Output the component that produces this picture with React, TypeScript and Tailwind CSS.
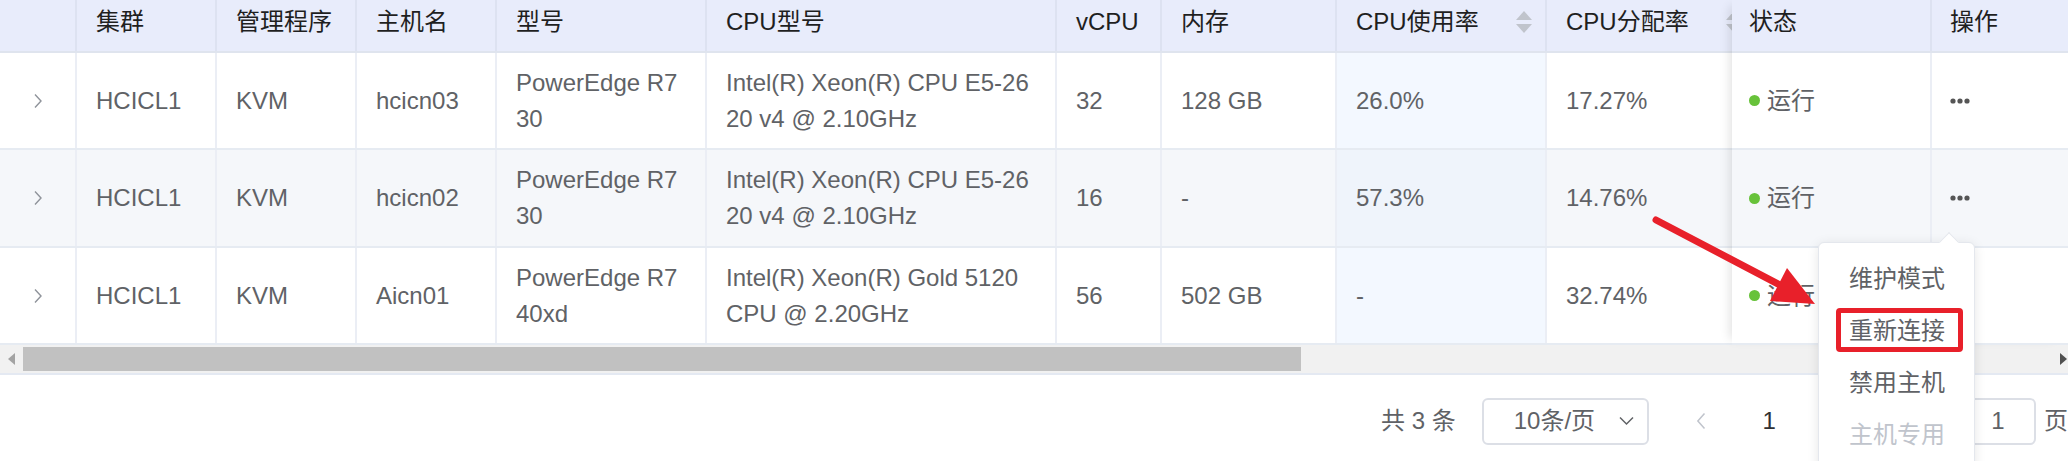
import React from 'react';

interface HostRow {
    cluster: string;
    hypervisor: string;
    host: string;
    model: string[];
    cpuModel: string[];
    vcpu: string;
    memory: string;
    cpuUsage: string;
    cpuAlloc: string;
}

const rows: HostRow[] = [
    {
        cluster: 'HCICL1',
        hypervisor: 'KVM',
        host: 'hcicn03',
        model: ['PowerEdge R7', '30'],
        cpuModel: ['Intel(R) Xeon(R) CPU E5-26', '20 v4 @ 2.10GHz'],
        vcpu: '32',
        memory: '128 GB',
        cpuUsage: '26.0%',
        cpuAlloc: '17.27%',
    },
    {
        cluster: 'HCICL1',
        hypervisor: 'KVM',
        host: 'hcicn02',
        model: ['PowerEdge R7', '30'],
        cpuModel: ['Intel(R) Xeon(R) CPU E5-26', '20 v4 @ 2.10GHz'],
        vcpu: '16',
        memory: '-',
        cpuUsage: '57.3%',
        cpuAlloc: '14.76%',
    },
    {
        cluster: 'HCICL1',
        hypervisor: 'KVM',
        host: 'Aicn01',
        model: ['PowerEdge R7', '40xd'],
        cpuModel: ['Intel(R) Xeon(R) Gold 5120', 'CPU @ 2.20GHz'],
        vcpu: '56',
        memory: '502 GB',
        cpuUsage: '-',
        cpuAlloc: '32.74%',
    },
];

const rowHeights = ['h-[97px]', 'h-[98px]', 'h-[97px]'];

const scrollGrid = 'grid grid-cols-[77px_140px_140px_140px_210px_350px_105px_175px_210px_210px]';
const fixedGrid = 'grid grid-cols-[200px_136px]';

function SortIcon() {
    return (
        <svg width="18" height="22" viewBox="0 0 18 22" className="shrink-0">
            <polygon points="9,0 17,9 1,9" fill="#c0c4cc" />
            <polygon points="1,13 17,13 9,22" fill="#c0c4cc" />
        </svg>
    );
}

function HeadCell({ label, sort, last }: { label: string; sort?: boolean; last?: boolean }) {
    return (
        <div className={`flex items-center justify-between pl-[19px] pr-[12px] pb-[7px] text-[#1f1f1f] whitespace-nowrap ${last ? '' : 'border-r-2 border-[#dde2f1]'}`}>
            <span>{label}</span>
            {sort && <SortIcon />}
        </div>
    );
}

function Cell({ children, className = '' }: { children: React.ReactNode; className?: string }) {
    return (
        <div className={`flex flex-col justify-center pl-[19px] border-r-2 border-[#ebeef5] whitespace-nowrap ${className}`}>
            {children}
        </div>
    );
}

export default function App() {
    const scrollHeaders = ['', '集群', '管理程序', '主机名', '型号', 'CPU型号', 'vCPU', '内存'];

    return (
        <div className="relative w-[2068px] h-[461px] overflow-hidden bg-white font-[Liberation_Sans,Noto_Sans_CJK_SC,sans-serif] text-[24px] leading-[36px] text-[#606266]">
            <div className="flex">
                {/* scrolling part */}
                <div className="w-[1732px] shrink-0 overflow-hidden">
                    <div className="w-[1757px]">
                        <div className={`${scrollGrid} h-[53px] bg-[#e8ecfb] border-b-2 border-[#dfe4ee]`}>
                            {scrollHeaders.map((h, i) => (
                                <HeadCell key={i} label={h} />
                            ))}
                            <HeadCell label="CPU使用率" sort />
                            <HeadCell label="CPU分配率" sort />
                        </div>
                        {rows.map((r, i) => (
                            <div
                                key={r.host}
                                className={`${scrollGrid} ${rowHeights[i]} border-b-2 border-[#e6ebf2] ${i === 1 ? 'bg-[#f5f7fa]' : 'bg-white'}`}
                            >
                                <div className="flex items-center justify-center border-r-2 border-[#ebeef5]">
                                    <svg width="10" height="16" viewBox="0 0 10 16">
                                        <path d="M2 1.5 L8 8 L2 14.5" fill="none" stroke="#8f939a" strokeWidth="1.4" />
                                    </svg>
                                </div>
                                <Cell>{r.cluster}</Cell>
                                <Cell>{r.hypervisor}</Cell>
                                <Cell>{r.host}</Cell>
                                <Cell>
                                    {r.model.map(l => <div key={l}>{l}</div>)}
                                </Cell>
                                <Cell>
                                    {r.cpuModel.map(l => <div key={l}>{l}</div>)}
                                </Cell>
                                <Cell>{r.vcpu}</Cell>
                                <Cell>{r.memory}</Cell>
                                <Cell className={i === 1 ? 'bg-[#eff4fb]' : 'bg-[#f3f8ff]'}>{r.cpuUsage}</Cell>
                                <Cell>{r.cpuAlloc}</Cell>
                            </div>
                        ))}
                    </div>
                </div>

                {/* fixed right part */}
                <div className="relative z-10 w-[336px] shrink-0 shadow-[-8px_0_10px_-6px_rgba(0,0,0,0.12)]">
                    <div className={`${fixedGrid} h-[53px] bg-[#e8ecfb] border-b-2 border-[#dfe4ee]`}>
                        <div className="flex items-center pl-[17px] pb-[7px] text-[#1f1f1f] border-r-2 border-[#dde2f1]">状态</div>
                        <div className="flex items-center pl-[18px] pb-[7px] text-[#1f1f1f]">操作</div>
                    </div>
                    {rows.map((r, i) => (
                        <div
                            key={r.host}
                            className={`${fixedGrid} ${rowHeights[i]} border-b-2 border-[#e6ebf2] ${i === 1 ? 'bg-[#f5f7fa]' : 'bg-white'}`}
                        >
                            <div className="flex items-center pl-[17px] border-r-2 border-[#ebeef5]">
                                <span className="w-[11px] h-[11px] rounded-full bg-[#67c23a] mr-[7px]" />
                                运行
                            </div>
                            <div className="flex items-center pl-[18px]">
                                <svg width="20" height="8" viewBox="0 0 20 8">
                                    <circle cx="3" cy="4" r="2.6" fill="#555" />
                                    <circle cx="10" cy="4" r="2.6" fill="#555" />
                                    <circle cx="17" cy="4" r="2.6" fill="#555" />
                                </svg>
                            </div>
                        </div>
                    ))}
                </div>
            </div>

            {/* horizontal scrollbar */}
            <div className="flex h-[30px] bg-[#f1f1f1] border-b-2 border-[#e4e9f2]">
                <div className="w-[23px] flex items-center justify-center">
                    <svg width="8" height="12" viewBox="0 0 8 12">
                        <polygon points="7,0 7,12 0,6" fill="#a3a3a3" />
                    </svg>
                </div>
                <div className="w-[1278px] my-[2px] bg-[#c1c1c1]" />
                <div className="flex-1" />
                <div className="w-[10px] flex items-center justify-end">
                    <svg width="8" height="12" viewBox="0 0 8 12">
                        <polygon points="0,0 0,12 7,6" fill="#505050" />
                    </svg>
                </div>
            </div>

            {/* pagination (the part under the menu is left as blank space) */}
            <div className="flex items-center h-[85px] pt-[7px] pl-[1381px] whitespace-nowrap">
                <span>共 3 条</span>
                <div className="ml-[26px] w-[174px] h-[47px] border-2 border-[#dcdfe6] rounded-[6px] flex items-center pl-[30px] pr-[13px]">
                    <span>10条/页</span>
                    <svg className="ml-auto" width="15" height="10" viewBox="0 0 15 10">
                        <path d="M1 1.5 L7.5 8 L14 1.5" fill="none" stroke="#606266" strokeWidth="1.5" />
                    </svg>
                </div>
                <svg className="ml-[46px]" width="12" height="20" viewBox="0 0 12 20">
                    <path d="M10 2 L3 10 L10 18" fill="none" stroke="#c0c4cc" strokeWidth="1.6" />
                </svg>
                <span className="ml-[56px] text-[#303133]">1</span>
                <div className="w-[184px] shrink-0" />
                <div className="w-[80px] h-[47px] border-2 border-[#dcdfe6] rounded-[6px] flex items-center justify-center">1</div>
                <span className="ml-[8px]">页</span>
            </div>

            {/* dropdown menu */}
            <div className="absolute left-[1818px] top-[242px] z-20 w-[157px] h-[240px] bg-white border border-[#e4e7ed] rounded-[6px] shadow-[0_2px_12px_rgba(0,0,0,0.1)] pt-[10px]">
                <div className="absolute left-[123px] -top-[8px] w-[14px] h-[14px] rotate-45 bg-white border-l border-t border-[#e4e7ed]" />
                <div className="h-[52px] flex items-center pl-[30px]">维护模式</div>
                <div className="h-[52px] flex items-center pl-[30px]">重新连接</div>
                <div className="h-[52px] flex items-center pl-[30px]">禁用主机</div>
                <div className="h-[52px] flex items-center pl-[30px] text-[#c0c4cc]">主机专用</div>
                <div className="absolute left-[17px] top-[65px] w-[127px] h-[44px] border-[5px] border-[#e8202a] rounded-[4px]" />
            </div>

            {/* annotation arrow */}
            <svg className="absolute left-0 top-0 z-30 pointer-events-none" width="2068" height="461" viewBox="0 0 2068 461">
                <line x1="1656" y1="220" x2="1782" y2="286" stroke="#e8202a" strokeWidth="7" strokeLinecap="round" />
                <polygon points="1815,304 1770,301 1787,268" fill="#e8202a" />
            </svg>
        </div>
    );
}
